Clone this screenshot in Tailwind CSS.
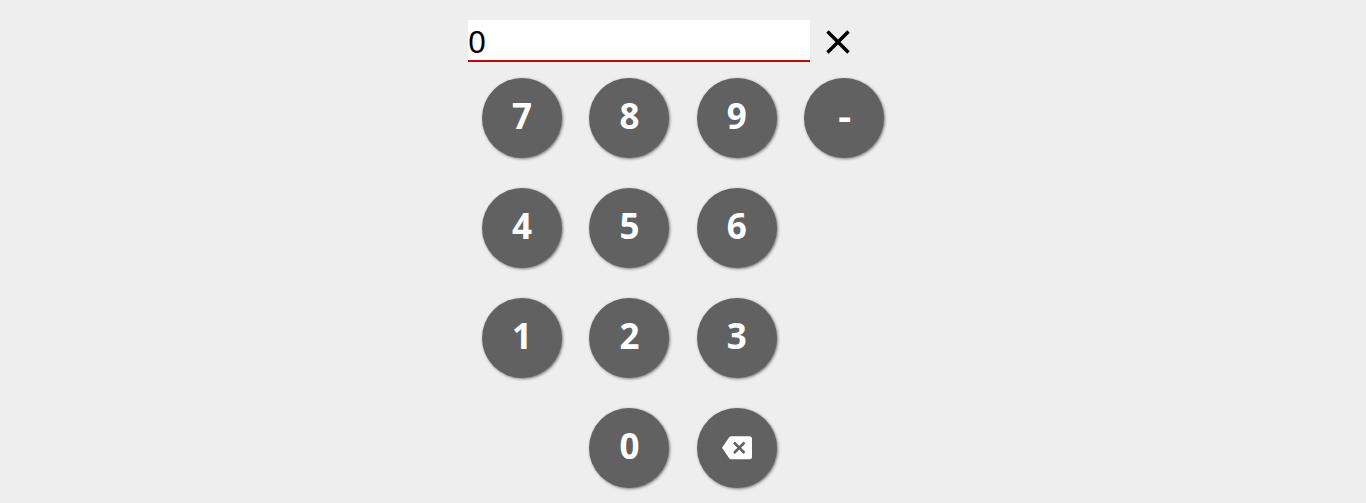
<!DOCTYPE html>
<html lang="en">
<head>
<meta charset="utf-8">
<title>Keypad</title>
<script src="https://cdn.jsdelivr.net/npm/@tailwindcss/browser@4"></script>
</head>
<body class="h-[503px] overflow-hidden bg-[#eeeeee] font-['Noto_Sans',sans-serif]">
<main class="ml-[468px] w-[430px] pt-5">
  <div class="flex h-[42px] items-center">
    <div class="flex h-[42px] w-[342px] items-center border-b-2 border-[#d30000] bg-white pt-[3px] text-[30px] leading-none text-black shadow-[0_1px_0_#f7f7f7]"><span class="origin-left scale-x-105">0</span></div>
    <button aria-label="Clear" class="ml-2 h-10 w-10"><svg viewBox="0 0 40 40" class="h-10 w-10" fill="none" stroke="#000" stroke-width="3.4"><path d="M9.5 10.5 30.5 31.5M30.5 10.5 9.5 31.5"/></svg></button>
  </div>
  <div class="mt-4 ml-3.5 grid grid-cols-[repeat(4,80px)] gap-x-[27.4px] gap-y-[30px] text-[35px] leading-none font-bold text-white [&>button]:flex [&>button]:h-20 [&>button]:w-20 [&>button]:items-center [&>button]:justify-center [&>button]:rounded-full [&>button]:bg-[#616161] [&>button]:pb-1.5 [&>button]:shadow-[1px_1px_3px_rgba(0,0,0,0.5)]">
    <button>7</button><button>8</button><button>9</button><button><span class="scale-x-115">-</span></button>
    <button>4</button><button>5</button><button>6</button>
    <button class="col-start-1">1</button><button>2</button><button>3</button>
    <button class="col-start-2">0</button>
    <button aria-label="Backspace"><svg class="mt-1.5 h-8 w-8" viewBox="0 0 32 32"><path fill="#fff" d="M10.2 4.3H28.5Q31 4.3 31 6.8V24.8Q31 27.3 28.5 27.3H10.2Q8.9 27.3 8 26.1L1 15.8 8 5.5Q8.9 4.3 10.2 4.3Z"/><path stroke="#616161" stroke-width="2.5" fill="none" d="M13 10.5 23.5 21M23.5 10.5 13 21"/></svg></button>
  </div>
</main>
</body>
</html>
